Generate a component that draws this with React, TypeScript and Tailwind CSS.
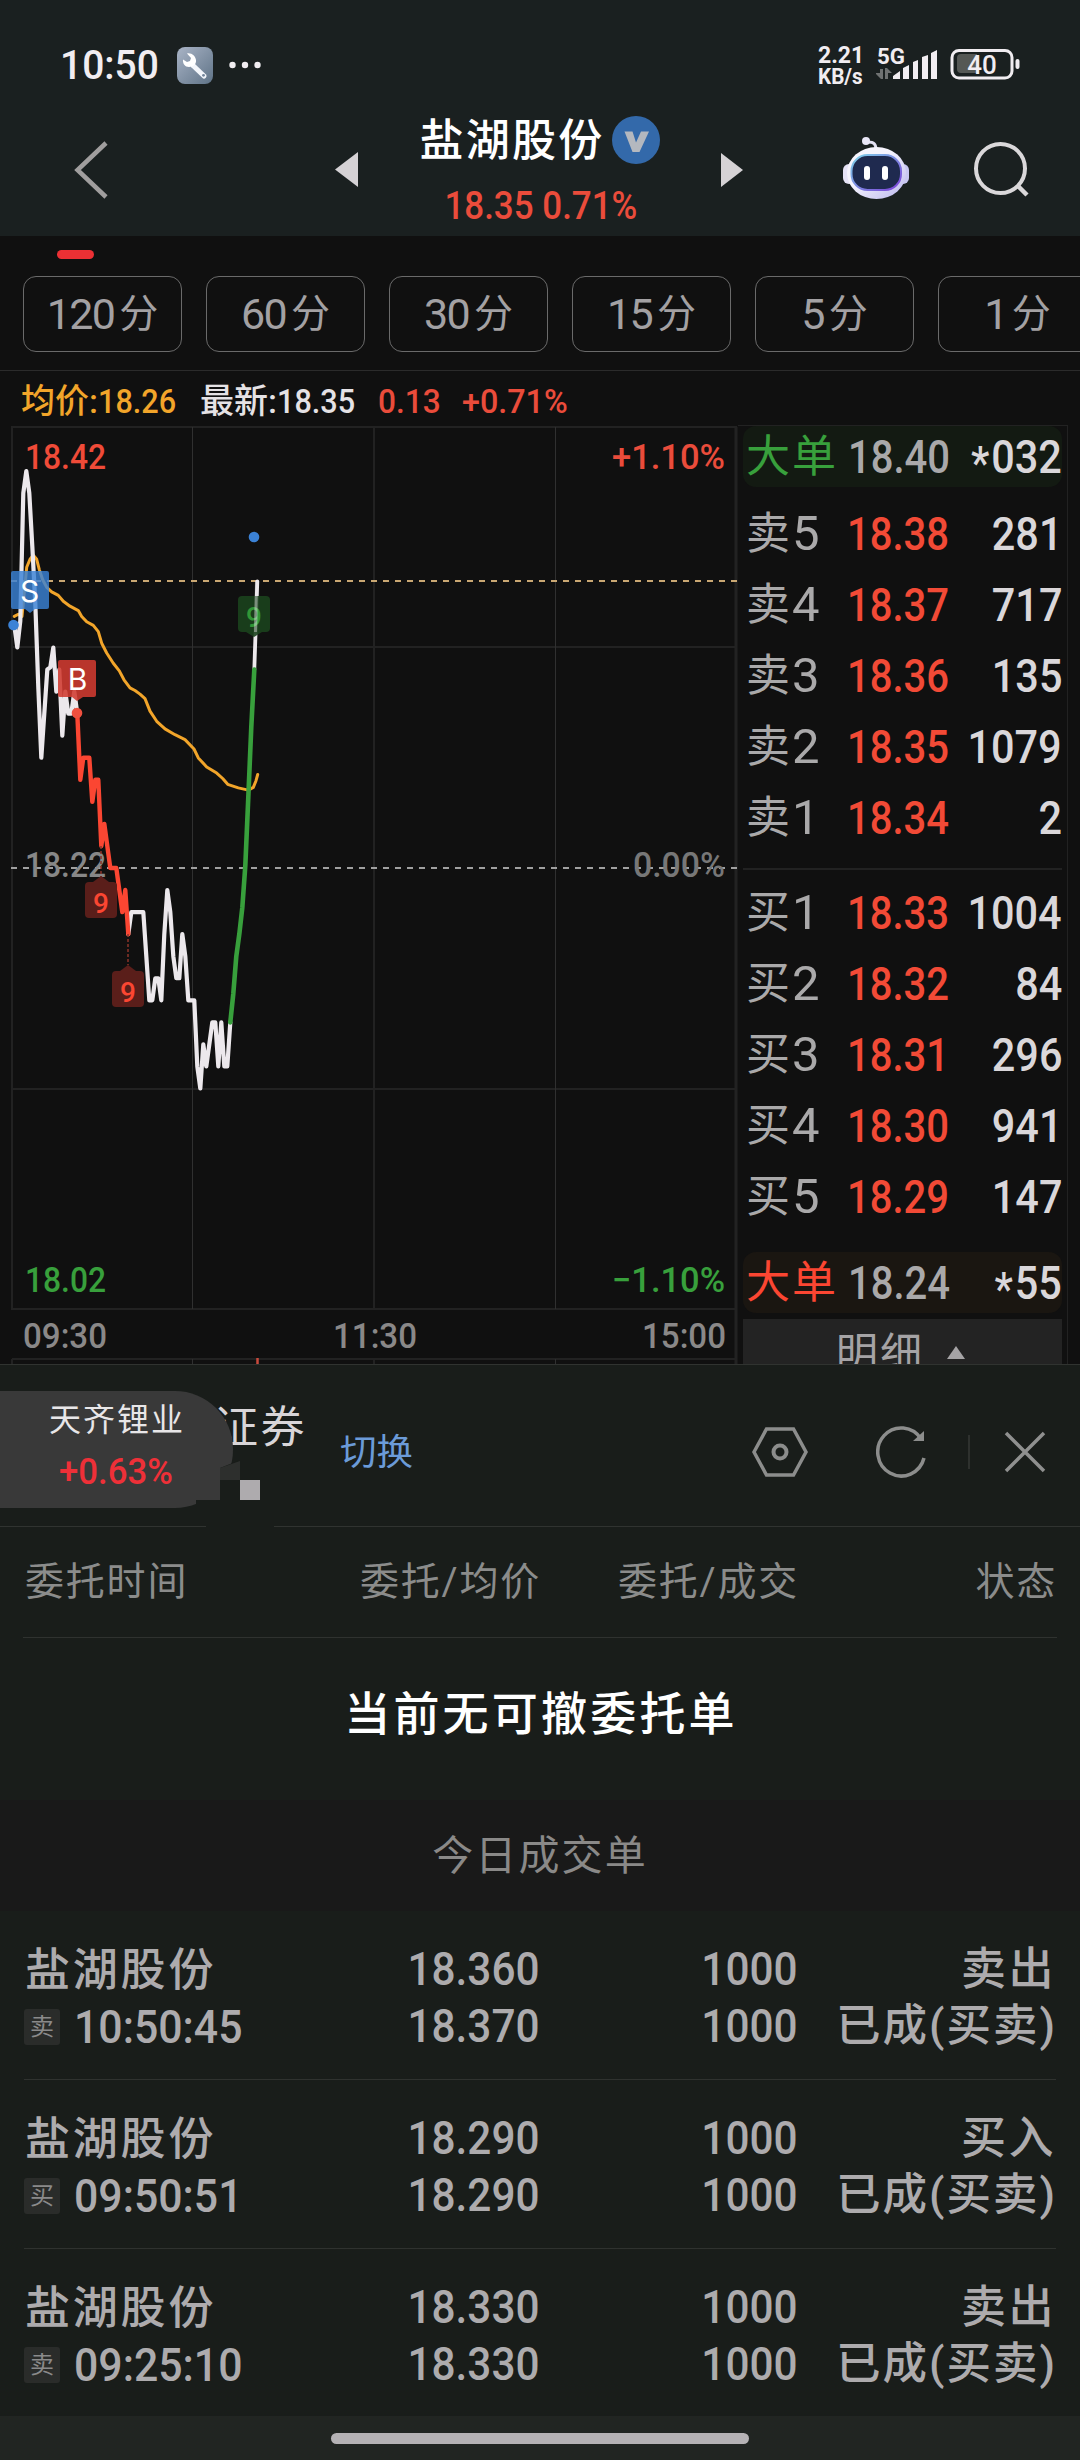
import { ReactNode } from "react";
import clsx from "clsx";

interface Quote {
  label: string;
  level: number;
  price: string;
  volume: string;
}

interface Deal {
  side: string;
  action: string;
  time: string;
  orderPrice: string;
  avgPrice: string;
}

const periods = ["120", "60", "30", "15", "5", "1"];

const sells: Quote[] = [
  { label: "卖", level: 5, price: "18.38", volume: "281" },
  { label: "卖", level: 4, price: "18.37", volume: "717" },
  { label: "卖", level: 3, price: "18.36", volume: "135" },
  { label: "卖", level: 2, price: "18.35", volume: "1079" },
  { label: "卖", level: 1, price: "18.34", volume: "2" },
];

const buys: Quote[] = [
  { label: "买", level: 1, price: "18.33", volume: "1004" },
  { label: "买", level: 2, price: "18.32", volume: "84" },
  { label: "买", level: 3, price: "18.31", volume: "296" },
  { label: "买", level: 4, price: "18.30", volume: "941" },
  { label: "买", level: 5, price: "18.29", volume: "147" },
];

const deals: Deal[] = [
  { side: "卖", action: "卖出", time: "10:50:45", orderPrice: "18.360", avgPrice: "18.370" },
  { side: "买", action: "买入", time: "09:50:51", orderPrice: "18.290", avgPrice: "18.290" },
  { side: "卖", action: "卖出", time: "09:25:10", orderPrice: "18.330", avgPrice: "18.330" },
];

// cents over 18.00, one entry per minute since 09:30
const minutes = [
  33, 32, 33.2, 39, 40, 39, 36.6, 34, 30.2, 27, 29, 31, 31.1, 32, 30, 31, 28, 30,
  29, 29, 30, 29, 26, 27, 27, 27, 25, 26, 26, 23, 24, 23, 22, 22, 22, 21, 20, 21,
  19, 20, 20, 20, 20, 20, 18, 16, 16, 17, 17, 16, 19, 21, 20, 18, 17, 17, 19, 18,
  16, 16, 16, 13, 12, 14, 13, 14, 15, 15, 13, 15, 13, 13, 15, 16.3, 18, 19, 20.2,
  22.1, 25.2, 28.4, 31, 35,
];

const average =
  "14.3,616.4 18.3,614.2 22,616.4 25,585.2 26.7,567.3 30,559.3 33.3,555.3 36.7,559.3 39.3,569.6 42.7,579.8 46.7,587.4 51.7,591.9 58.3,595.4 63.3,601.3 70,606.2 78.3,610.6 81.7,616.4 86.7,621.8 93.3,625.4 98.3,631.6 101.7,643.2 106.7,653 113.3,663.3 119.3,670.9 124,679.8 130,687.9 135,690.5 140,694.1 145,698.6 150,711.1 156.7,721.3 165,728.9 175,734.7 185,739.6 194,749 198.3,757.9 206.7,766.9 216.7,773.1 222.7,778.5 227.7,784.3 238.3,787.9 248.3,790.1 253.3,787.4 256,780.7 257.7,774.5";

const linePoints = (from: number, to: number) =>
  minutes
    .slice(from, to + 1)
    .map((v, i) => `${14.3 + (from + i) * 3},${868 - (v - 22) * 22.05}`)
    .join(" ");

const Num = ({ children, className }: { children: ReactNode; className?: string }) => (
  <span className={clsx("inline-block shrink-0 whitespace-nowrap font-medium", className)}>{children}</span>
);

const StatusBar = () => (
  <div className="flex h-[128px] items-start pl-[60px] pr-[58px] text-[#f1edf1]">
    <Num className="mt-[41px] w-[107px] origin-left scale-x-[0.95] text-[41px] leading-[48px]">
      10:50
    </Num>
    <svg className="ml-[10px] mt-[47px]" width="36" height="37" viewBox="0 0 36 37">
      <defs>
        <linearGradient id="tool" x1="0" y1="0" x2="1" y2="1">
          <stop offset="0" stopColor="#a9b4c6" />
          <stop offset="1" stopColor="#5f7387" />
        </linearGradient>
      </defs>
      <rect width="36" height="37" rx="8" fill="url(#tool)" />
      <path d="M16 18.5 27 29" stroke="#f3f6fb" strokeWidth="5" strokeLinecap="round" />
      <path
        d="M10 6.5 14 11l-1 3-3 1-4-2.5c-.5 4 2 7.500 6 7.500 4.500 0 7.500-3 7-7-.5-4-4.500-7.500-9-6.500z"
        fill="#fff"
      />
      <circle cx="26.5" cy="28.3" r="1.400" fill="#72849a" />
    </svg>
    <svg className="ml-[16px] mt-[61px]" width="32" height="8" viewBox="0 0 32 8" fill="#f1edf1">
      <circle cx="3.500" cy="4" r="3.200" />
      <circle cx="16" cy="4" r="3.200" />
      <circle cx="28.5" cy="4" r="3.200" />
    </svg>
    <div className="ml-auto mt-[45px] w-[58px] text-[23px] font-bold leading-[21px]">
      <div>2.21</div>
      <div className="origin-left scale-x-[0.94] text-[22px]">KB/s</div>
    </div>
    <svg className="mt-[44px]" width="64" height="40" viewBox="0 0 64 40" fill="#f1edf1">
      <text x="1" y="20" fontSize="22" fontWeight="700" textLength="28" lengthAdjust="spacingAndGlyphs">
        5G
      </text>
      <g fill="#6f7272">
        <path d="M4 25h3v10H5l-6-6h5zM9 35V24h2l5 5h-4v6z" />
      </g>
      <path d="M17 35v-3l7-5v8zM27 35V24l6-3v14zM37 35V18l5-2v19zM46 35V13l6-2v24zM55 35V9l6-3v29z" />
    </svg>
    <svg className="ml-[10px] mt-[48px]" width="72" height="34" viewBox="0 0 72 34">
      <rect x="2" y="2.500" width="60" height="27.500" rx="7" fill="none" stroke="#f1edf1" strokeWidth="3" />
      <path d="M11 6h16v19H11a4 4 0 0 1-4-4V10a4 4 0 0 1 4-4z" fill="#555855" />
      <rect x="65.5" y="11" width="4" height="10" rx="2" fill="#f1edf1" />
      <text x="32" y="26" fontSize="26" fontWeight="500" fill="#f1edf1" textAnchor="middle">
        40
      </text>
    </svg>
  </div>
);

const Robot = () => (
  <svg width="68" height="66" viewBox="0 0 68 66">
    <defs>
      <linearGradient id="shell" x1="0" y1="0" x2="1" y2="1">
        <stop offset="0.4" stopColor="#f6f4fd" />
        <stop offset="1" stopColor="#b9b6ee" />
      </linearGradient>
      <linearGradient id="rim" x1="0" y1="0" x2="1" y2="1">
        <stop offset="0" stopColor="#7fd4ea" />
        <stop offset="1" stopColor="#7b3fd8" />
      </linearGradient>
    </defs>
    <path d="M26 6c6 0 8 2 8 8" fill="none" stroke="#e4e2f4" strokeWidth="3" />
    <circle cx="24" cy="5" r="4" fill="#e9e7f7" />
    <rect x="1" y="28" width="12" height="20" rx="6" fill="#e6e3f7" />
    <rect x="55" y="28" width="12" height="20" rx="6" fill="#c9c7f2" />
    <ellipse cx="34.5" cy="37" rx="29.5" ry="26" fill="url(#shell)" />
    <rect x="9.500" y="19" width="49.5" height="35" rx="16" fill="#1f2a4f" stroke="url(#rim)" strokeWidth="2" />
    <rect x="22" y="30" width="6" height="14" rx="3" fill="#fff" />
    <rect x="40" y="30" width="6" height="14" rx="3" fill="#fff" />
  </svg>
);

const TitleBar = () => (
  <div className="flex h-[108px] items-start">
    <svg className="ml-[73px] mt-[12px]" width="36" height="60" viewBox="0 0 36 60">
      <path d="M33 3 4.500 30 33 57" fill="none" stroke="#a09e9e" strokeWidth="4.500" />
    </svg>
    <svg className="ml-[226px] mt-[24px]" width="23" height="35" viewBox="0 0 23 35">
      <path d="M23 0v35L0 17.500z" fill="#d5d2d5" />
    </svg>
    <div className="ml-[26px] flex w-[310px] flex-col items-center">
      <div className="-mt-[12px] flex h-[50px] items-center pl-[2px]">
        <div className="text-[44px] font-medium leading-[50px] tracking-[2.2px] text-white">盐湖股份</div>
        <svg className="-mt-[2px] ml-[8px]" width="48" height="48" viewBox="0 0 48 48">
          <circle cx="24" cy="24" r="24" fill="#3369aa" />
          <path d="M12.500 15.500h8l3.500 11 5-11h8L27.500 36h-7z" fill="#b4b8bf" />
        </svg>
      </div>
      <Num className="ml-[3px] mt-[18px] scale-x-[0.92] text-[38px] leading-[44px] text-[#ea4c3b]">18.35 0.71%</Num>
    </div>
    <svg className="ml-[27px] mt-[25px]" width="22" height="34" viewBox="0 0 22 34">
      <path d="M0 0v34l22-17z" fill="#d5d2d5" />
    </svg>
    <div className="ml-[99px] mt-[8px]">
      <Robot />
    </div>
    <svg className="ml-[63px] mt-[13px]" width="58" height="58" viewBox="0 0 58 58">
      <circle cx="27.500" cy="27.500" r="24.5" fill="none" stroke="#dad8da" strokeWidth="4" />
      <path d="m45 45 9 9" stroke="#dad8da" strokeWidth="4.500" />
    </svg>
  </div>
);

const PeriodTabs = () => (
  <div className="h-[135px] overflow-hidden border-b border-[#2b2b2b]">
    <div className="ml-[57px] mt-[14px] h-[9px] w-[37px] rounded-full bg-[#ec3034]" />
    <div className="ml-[23px] mt-[17px] flex gap-[24px]">
      {periods.map((value) => (
        <div
          key={value}
          className="flex h-[76px] w-[159px] shrink-0 items-center justify-center rounded-[13px] border border-[#6a6a6a] text-[#a3a1a3]"
        >
          <span className="text-[43px] leading-[50px] tracking-[-1.6px]">{value}</span>
          <span className="ml-[5px] text-[39px] leading-[50px]">分</span>
        </div>
      ))}
    </div>
  </div>
);

interface BadgeProps {
  x: number;
  y: number;
  up?: boolean;
  fill: string;
  color: string;
}

const Badge9 = ({ x, y, up, fill, color }: BadgeProps) => (
  <g>
    <rect x={x - 16} y={y} width="32" height="36" rx="4" fill={fill} />
    <path d={up ? `M${x - 8} ${y}l8-6 8 6z` : `M${x - 8} ${y + 36}l8 5 8-5z`} fill={fill} />
    <text x={x} y={y + 31} fontSize="28" fill={color} textAnchor="middle" className="font-medium">
      9
    </text>
  </g>
);

const PriceLabel = (props: { x: number; y: number; width: number; fill: string; children: string }) => (
  <text
    x={props.x}
    y={props.y}
    fontSize="35"
    className="font-medium"
    fill={props.fill}
    textLength={props.width}
    lengthAdjust="spacingAndGlyphs"
  >
    {props.children}
  </text>
);

const MinuteChart = () => (
  <svg className="shrink-0" width="738" height="939" viewBox="0 425 738 939">
    <g fill="none" stroke="#222222" strokeWidth="2">
      <path d="M11 427H737M12 1309H737M12 647H737M12 1089H737M12 427V1310M374 427V1309" />
      <path d="M12 1359H737M12 1359v5M374 1359v5" />
      <path d="M736 427V1364" strokeWidth="3" />
      <path d="M192.5 427V1309M555.5 427V1309M192.5 1359v5M555.5 1359v5" stroke="#303030" strokeWidth="1" />
    </g>
    <path d="M257.500 1358v6" stroke="#c94a3c" strokeWidth="2.500" />
    <path d="M11 868H737" stroke="#a0a0a0" strokeWidth="2" strokeDasharray="6 6" />
    <path d="M11 581H737" stroke="#caa873" strokeWidth="2" strokeDasharray="6 6" />

    <PriceLabel x={25} y={469} width={81} fill="#f04b38">18.42</PriceLabel>
    <PriceLabel x={612} y={469} width={113} fill="#ea4c3b">+1.10%</PriceLabel>
    <PriceLabel x={25} y={877} width={81} fill="#878787">18.22</PriceLabel>
    <PriceLabel x={633} y={877} width={92} fill="#777777">0.00%</PriceLabel>
    <PriceLabel x={25} y={1292} width={81} fill="#38a03c">18.02</PriceLabel>
    <PriceLabel x={612} y={1292} width={113} fill="#38a03c">−1.10%</PriceLabel>
    <PriceLabel x={23} y={1348} width={84} fill="#8a8888">09:30</PriceLabel>
    <PriceLabel x={333} y={1348} width={84} fill="#8a8888">11:30</PriceLabel>
    <PriceLabel x={642} y={1348} width={84} fill="#8a8888">15:00</PriceLabel>

    <g fill="none" strokeLinejoin="round" strokeLinecap="round">
      <polyline points={average} stroke="#f2a52a" strokeWidth="3" />
      <polyline points={linePoints(0, 21)} stroke="#ece8ec" strokeWidth="4.200" />
      <polyline points={linePoints(38, 72)} stroke="#ece8ec" strokeWidth="4.200" />
      <polyline points={linePoints(80, 81)} stroke="#ece8ec" strokeWidth="3.800" />
      <polyline points={linePoints(21, 38)} stroke="#fb4632" strokeWidth="4.400" />
      <polyline points={linePoints(72, 80)} stroke="#38a03c" strokeWidth="4.600" />
    </g>

    <path d="M101 846V877M128 934V965" stroke="#8a3328" strokeWidth="1.500" strokeDasharray="3 2" />
    <Badge9 x={101} y={882} up fill="#5a1e1a" color="#fb4632" />
    <Badge9 x={128} y={971} up fill="#5a1e1a" color="#fb4632" />
    <g opacity="0.9">
      <Badge9 x={254} y={596} fill="#1b421d" color="#35a53b" />
    </g>
    <path d="M256.500 581 255.500 632" stroke="#ece8ec" strokeWidth="3" opacity="0.4" />

    <g fill="#3b82d6">
      <circle cx="254" cy="537" r="5.300" />
      <circle cx="13.500" cy="625" r="5.300" />
    </g>
    <circle cx="77" cy="713" r="5.300" fill="#f0503f" />
    <path d="M13 571h34q2 0 2 2v34q0 2-2 2H35l-5 4-5-4H13q-2 0-2-2v-34q0-2 2-2z" fill="#3b82d6" opacity="0.82" />
    <path d="M60 660h34q2 0 2 2v33q0 2-2 2H83l-6 4-5-4H60q-2 0-2-2v-33q0-2 2-2z" fill="#d03a30" opacity="0.88" />
    <g fill="#fff" fontSize="30" textAnchor="middle" fontFamily="Inter, sans-serif">
      <text x="29.500" y="602">S</text>
      <text x="77.500" y="690">B</text>
    </g>
  </svg>
);

const Volume = ({ value }: { value: string }) => {
  const starred = value.startsWith("*");
  return (
    <Num className="ml-auto origin-right scale-x-[0.9] text-[46px] leading-[56px] text-[#dad7da]">
      {starred && <span className="relative top-[6px] mr-[2px]">*</span>}
      {starred ? value.slice(1) : value}
    </Num>
  );
};

const QuoteRow = ({ label, level, price, volume }: Quote) => (
  <div className="flex h-[71px] items-center">
    <div className="flex w-[101px] shrink-0 items-center text-[#aaa9aa]">
      <span className="text-[44px] leading-[56px]">{label}</span>
      <span className="ml-[2px] text-[49px] leading-[56px]">{level}</span>
    </div>
    <Num className="w-0 origin-left scale-x-[0.87] text-[46px] leading-[56px] text-[#f24a36]">{price}</Num>
    <Volume value={volume} />
  </div>
);

const BigOrderRow = ({ sell, price, volume }: { sell?: boolean; price: string; volume: string }) => (
  <div
    className={clsx(
      "flex h-[61px] items-center rounded-[13px] pl-[3px]",
      sell ? "bg-[#131a12] text-[#38a03c]" : "bg-[#1a1611] text-[#fb4632]"
    )}
  >
    <div className="w-[102px] shrink-0 whitespace-nowrap text-[44px] leading-[56px] tracking-[2px]">大单</div>
    <Num className="w-0 origin-left scale-x-[0.87] text-[46px] leading-[56px] text-[#aaa9aa]">{price}</Num>
    <Volume value={volume} />
  </div>
);

const OrderBook = () => (
  <div className="h-[939px] w-[330px] shrink-0 overflow-hidden border-r border-t border-[#222222] pl-[5px] pr-[5px]">
    <BigOrderRow sell price="18.40" volume="*032" />
    <div className="mt-[11px] pl-[3px]">
      {sells.map((q) => (
        <QuoteRow key={q.level} {...q} />
      ))}
    </div>
    <div className="mt-[15px] h-[2px] bg-[#222222]" />
    <div className="mt-[7px] pl-[3px]">
      {buys.map((q) => (
        <QuoteRow key={q.level} {...q} />
      ))}
    </div>
    <div className="mt-[20px]">
      <BigOrderRow price="18.24" volume="*55" />
    </div>
    <div className="mt-[6px] flex h-[78px] items-start bg-[#232323] pl-[93px]">
      <span className="mt-[7px] text-[42px] leading-[56px] tracking-[2px] text-[#a5a3a5]">明细</span>
      <svg className="ml-[23px] mt-[27px]" width="18" height="13" viewBox="0 0 18 13">
        <path d="M9 0 18 13H0z" fill="#a5a3a5" />
      </svg>
    </div>
  </div>
);

const SheetHeader = () => (
  <div className="relative flex h-[163px] items-start border-b border-t border-[#303330]">
    <div className="ml-[214px] mt-[35px] whitespace-nowrap text-[44px] leading-[56px] tracking-[2.5px] text-[#d8d5d8]">
      证券
    </div>
    <div className="ml-[33px] mt-[65px] whitespace-nowrap text-[36.5px] leading-[46px] text-[#6b9bd8]">切换</div>
    <svg className="ml-auto mt-[62px]" width="56" height="50" viewBox="0 0 56 50" fill="none" stroke="#8c8d8c" strokeWidth="3.500">
      <path d="M2 25 14.500 2h27L54 25 41.500 48h-27z" />
      <circle cx="28" cy="25" r="6.500" strokeWidth="4" />
    </svg>
    <svg className="ml-[68px] mt-[60px]" width="52" height="54" viewBox="0 0 52 54">
      <path d="M48 33A23.500 24 0 1 1 45 14" fill="none" stroke="#8c8d8c" strokeWidth="3.500" />
      <path d="M48 6v10H37z" fill="#8c8d8c" />
    </svg>
    <div className="ml-[40px] mt-[70px] h-[34px] w-[2px] bg-[#2e312e]" />
    <svg className="ml-[34px] mr-[34px] mt-[66px]" width="42" height="42" viewBox="0 0 42 42">
      <path d="m2 2 38 38M40 2 2 40" stroke="#8f908f" strokeWidth="3.500" />
    </svg>

    {/* floating quote over the account name */}
    <div className="absolute left-0 top-[26px] h-[117px] w-[233px] rounded-r-[58px] bg-[#393939] pl-[49px] pt-[7px]">
      <div className="whitespace-nowrap text-[32px] leading-[44px] tracking-[2px] text-[#e8e6e8]">天齐锂业</div>
      <Num className="ml-[10px] mt-[8px] origin-left scale-x-[0.94] text-[37px] leading-[44px] text-[#ee3038]">
        +0.63%
      </Num>
    </div>
    {/* masked part of the account number */}
    <svg className="absolute left-[180px] top-[90px]" width="94" height="75" viewBox="180 1455 94 75">
      <path d="M196 1500h24v-32l20-8v-5h34v75h-68v-20h-10z" fill="#191d1a" />
      <path d="M196 1468h24v32h-24z" fill="#393939" />
      <path d="M220 1468l20-7v19h-20z" fill="#2d2f2d" />
      <path d="M240 1480h20v20h-20z" fill="#aeabae" />
    </svg>
  </div>
);

const NumPair = ({ first, second, className }: { first: string; second: string; className?: string }) => (
  <div className={clsx("flex flex-col items-end text-[46px] leading-[57px]", className)}>
    <Num className="origin-right scale-x-[0.92]">{first}</Num>
    <Num className="origin-right scale-x-[0.92]">{second}</Num>
  </div>
);

const DealRow = ({ deal, last }: { deal: Deal; last?: boolean }) => (
  <div className={clsx("mx-[24px] flex h-[169px] pt-[30px] text-[#adabad]", !last && "border-b border-[#2f322f]")}>
    <div className="w-[300px]">
      <div className="pl-[1px] pt-[1px] text-[45px] font-medium leading-[57px] tracking-[2.8px]">盐湖股份</div>
      <div className="flex h-[55px] items-center">
        <span className="flex h-[36px] w-[36px] items-center justify-center rounded-[3px] bg-[#2a2c2a] text-[24px] leading-[36px] text-[#8a8a8a]">
          {deal.side}
        </span>
        <Num className="ml-[14px] mt-[2px] origin-left scale-x-[0.93] text-[46px] leading-[55px]">{deal.time}</Num>
      </div>
    </div>
    <NumPair className="w-[216px]" first={deal.orderPrice} second={deal.avgPrice} />
    <NumPair className="w-[258px]" first="1000" second="1000" />
    <div className="flex flex-1 flex-col items-end whitespace-nowrap font-medium">
      <div className="text-[45px] leading-[57px] tracking-[2.5px]">{deal.action}</div>
      <div className="-mr-[1px] text-[44.5px] leading-[57px] tracking-[2px]">已成(买卖)</div>
    </div>
  </div>
);

const OrderSheet = () => (
  <div className="h-[1052px] bg-[#191d1a]">
    <SheetHeader />
    <div className="mx-[23px] flex h-[111px] items-center border-b border-[#2f322f] text-[39px] tracking-[1.8px] text-[#8b8c8b]">
      <div className="w-[300px] pl-[2px]">委托时间</div>
      <div className="w-[218px] text-right">委托/均价</div>
      <div className="w-[258px] text-right">委托/成交</div>
      <div className="flex-1 text-right">状态</div>
    </div>
    <div className="flex h-[162px] items-center justify-center pb-[10px] pl-[2px] text-[46px] font-medium tracking-[3.2px] text-white">
      当前无可撤委托单
    </div>
    <div className="flex h-[111px] items-center justify-center bg-[#191919] pt-[3px] text-[41px] tracking-[2.1px] text-[#8a8988]">
      今日成交单
    </div>
    {deals.map((deal, i) => (
      <DealRow key={deal.time} deal={deal} last={i === deals.length - 1} />
    ))}
  </div>
);

const App = () => (
  <div className="h-[2460px] w-[1080px] overflow-hidden bg-[#101010] font-[Roboto,'Noto_Sans_CJK_SC',sans-serif]">
    <div className="h-[236px] bg-[#1a2020]">
      <StatusBar />
      <TitleBar />
    </div>
    <PeriodTabs />
    <div className="flex h-[54px] items-center whitespace-nowrap pl-[21px] pt-[6px] text-[34px] font-medium leading-[48px]">
      <div className="flex w-[179px] text-[#f2a52a]">
        均价:<Num className="origin-left scale-x-[0.9]">18.26</Num>
      </div>
      <div className="flex w-[178px] text-[#e5e2e5]">
        最新:<Num className="origin-left scale-x-[0.9]">18.35</Num>
      </div>
      <Num className="w-[84px] origin-left scale-x-[0.93] text-[#ea4c3b]">0.13</Num>
      <Num className="origin-left scale-x-[0.95] text-[#ea4c3b]">+0.71%</Num>
    </div>
    <div className="flex">
      <MinuteChart />
      <OrderBook />
    </div>
    <OrderSheet />
    <div className="flex h-[44px] justify-center bg-[#212522] pt-[17px]">
      <div className="h-[11px] w-[418px] rounded-full bg-[#b5b2b5]" />
    </div>
  </div>
);

export default App;
